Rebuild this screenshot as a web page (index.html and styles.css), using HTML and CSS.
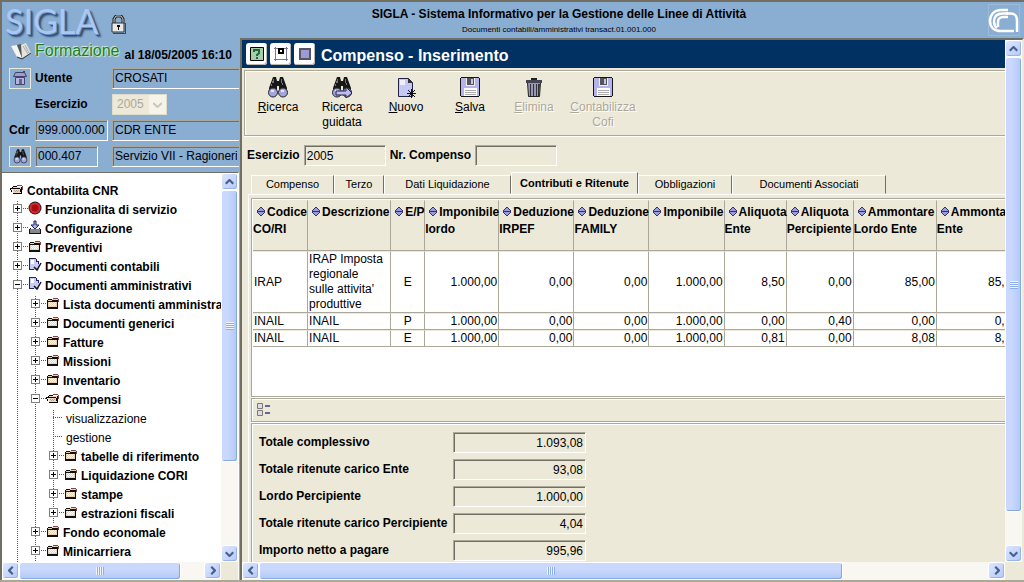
FILE: index.html
```html
<!DOCTYPE html>
<html lang="it">
<head>
<meta charset="utf-8">
<title>SIGLA - Compenso</title>
<link rel="stylesheet" href="styles.css">
</head>
<body>
<svg class="defs" aria-hidden="true">
  <symbol id="i-folder" viewBox="0 0 14 14"><path d="M2 5h3l1-2h6v8H2z" fill="#ecd2b6"/><path d="M3 6h1v1H3zM5 6h1v1H5zM7 6h1v1H7zM9 6h1v1H9zM4 7h1v1H4zM6 7h1v1H6zM8 7h1v1H8zM3 8h1v1H3zM5 8h1v1H5zM7 8h1v1H7zM9 8h1v1H9zM4 9h1v1H4zM6 9h1v1H6zM8 9h1v1H8z" fill="#fff"/><path d="M2 3h4v1h6v9H1V4h1zM2 6v5h9V6z" fill="#111" fill-rule="evenodd"/><path d="M2 4h4v1H2z" fill="#ecd2b6"/><path d="M7 2h5v1H7z" fill="#844"/><path d="M12 3h1v3h-1z" fill="#844"/></symbol>
  <symbol id="i-open" viewBox="0 0 14 14"><path d="M2 5h10v6H3z" fill="#f0d8bc"/><path d="M0 6h10v1H1v1H0zM1 8h1v2H1zM2 10h1v2h9V5h-1v6H3v-1zM3 4h4v1H3zM2 5h1v1H2zM10 7h1v3h-1z" fill="#000"/><path d="M7 3h5v1H7zM12 4h1v4h-1z" fill="#844"/><path d="M4 8h1v1H4zM6 8h1v1H6zM8 8h1v1H8zM5 9h1v1H5zM7 9h1v1H7z" fill="#b98"/></symbol>
  <symbol id="i-stop" viewBox="0 0 14 14"><circle cx="7" cy="7" r="6.5" fill="#222"/><circle cx="7" cy="7" r="5.5" fill="#d42a2a"/><circle cx="7" cy="7" r="3.5" fill="#a80c12"/></symbol>
  <symbol id="i-conf" viewBox="0 0 14 14"><path d="M2 9h10v4H2z" fill="#888"/><path d="M2 8h1v1H2zM11 8h1v1h-1zM1 9h1v5H1zM12 9h1v5h-1zM1 13h12v1H1z" fill="#111"/><path d="M6 1h2v4h3L7 9 3 5h3z" fill="#aab4ee" stroke="#226"/></symbol>
  <symbol id="i-doc" viewBox="0 0 14 14"><path d="M2 1h6l3 3v8H2z" fill="#c8ccf4"/><path d="M1 0h7v1H2v10h4v1H1zM8 1h1v2h2v3h-1V4H8z" fill="#226"/><path d="M6 9l3 3 4-7" fill="none" stroke="#111" stroke-width="1.5"/><path d="M3 2h3v4H3z" fill="#fff"/></symbol>
  <symbol id="i-bino" viewBox="0 0 22 21"><path d="M6 0h3l1 4h2l1-4h3l4 11v5h-8V9h-2v7H2v-5z" fill="#171717"/><path d="M6 2h1v4H5v3H4V7h1V4h1zM14 2h1v4h1v2h-1V6h-1z" fill="#777"/><circle cx="6" cy="15.500" r="4.500" fill="#a3a6dc" stroke="#222"/><circle cx="16" cy="15.500" r="4.500" fill="#a3a6dc" stroke="#222"/><path d="M4 13h3v2H4zM14 13h3v2h-3z" fill="#e4e5ff"/></symbol>
  <symbol id="i-save" viewBox="0 0 20 20"><path d="M0 1h1V0h18v1h1v18h-1v1H1v-1H0z" fill="#14141c"/><path d="M1 1h18v18H1z" fill="#b4b4e8"/><path d="M6 1h9v8H6z" fill="#eee"/><path d="M7 1h7v7H7z" fill="#555"/><path d="M11 2h2v5h-2z" fill="#c4c4ee"/><path d="M4 11h13v8H4z" fill="#fff"/><path d="M5 13h11v1H5zM5 15h11v1H5zM5 17h11v1H5z" fill="#aaa"/></symbol>
  <symbol id="i-up" viewBox="0 0 9 6"><path d="M4 0h1l4 4-1.500 1.500L4.500 2.600 1.500 5.500 0 4z" fill="#45608c"/></symbol>
  <symbol id="i-down" viewBox="0 0 9 6"><path d="M4 6h1l4-4L7.500.500l-3 2.900-3-2.900L0 2z" fill="#45608c"/></symbol>
  <symbol id="i-left" viewBox="0 0 6 9"><path d="M0 4v1l4 4 1.500-1.500-2.900-3 2.900-3L4 0z" fill="#45608c"/></symbol>
  <symbol id="i-right" viewBox="0 0 6 9"><path d="M6 4v1L2 9 .500 7.500l2.900-3-2.900-3L2 0z" fill="#45608c"/></symbol>
  <symbol id="i-sort" viewBox="0 0 8 9"><path d="M3 0h2v1h1v1h1v1h1v3H7v1H6v1H5v1H3V8H2V7H1V6H0V3h1V2h1V1h1z" fill="#33335c"/><path d="M3 1h2v1h1v1h1v1H1V3h1V2h1zM1 5h6v1H6v1H5v1H3V7H2V6H1z" fill="#9a9cdf"/></symbol>
</svg>

<aside class="side">
  <div class="brand">
    <span class="wordmark">SIGLA</span>
    <svg class="lock" viewBox="0 0 15 19"><path d="M3 9V4l2-3h5l2 3v5" fill="none" stroke="#222" stroke-width="3"/><path d="M3 9V4l2-3h5l2 3v5" fill="none" stroke="#ccc"/><path d="M2 18h12V8h1v11H2z" fill="#445"/><path d="M1 8h12v9H1z" fill="#e8e8e8" stroke="#333"/><path d="M6 10h3v2H8v3H7v-3H6z" fill="#111"/></svg>
  </div>
  <div class="context">
    <svg class="book" viewBox="0 0 22 17"><path d="M1 3l6-1 5 13-5-1z" fill="#f4f4ee"/><path d="M7 2l4-1 5 9-4 5z" fill="#555"/><path d="M11 2l5-2 5 10-9 5z" fill="#e4e4dc"/><path d="M13 3l5 8M15 2l4 8" stroke="#aaa"/><path d="M7 14l5 2 9-6" fill="none" stroke="#333"/></svg>
    <span class="mode">Formazione</span>
    <span class="date">al 18/05/2005 16:10</span>
  </div>
  <form class="login">
    <div class="lrow">
      <button type="button" class="ibtn" aria-label="Home"><svg width="16" height="16" viewBox="0 0 16 16"><path d="M3.500 7.500h9v7h-9z" fill="#b4b4e8" stroke="#446"/><path d="M1.500 6.500l2-4h9l2 4z" fill="#9c9cd0" stroke="#446"/><path d="M11 1h2v2h-2z" fill="#446"/><path d="M7 9h3v5H7z" fill="#667"/></svg></button>
      <label class="mid" for="utente">Utente</label>
      <input class="field open" id="utente" value="CROSATI" readonly>
    </div>
    <div class="lrow">
      <span class="lead"></span>
      <label class="mid" for="anno">Esercizio</label>
      <span class="select"><select id="anno" disabled><option>2005</option></select><svg class="chev" width="9" height="6"><path d="M0 1l4.500 4L9 1" fill="none" stroke="#c9c7ba" stroke-width="2"/></svg></span>
    </div>
    <div class="lrow">
      <label class="lead" for="cdr">Cdr</label>
      <span class="mid"><input class="field" id="cdr" value="999.000.000" readonly></span>
      <input class="field open" aria-label="Descrizione Cdr" value="CDR ENTE" readonly>
    </div>
    <div class="lrow">
      <button type="button" class="ibtn" aria-label="Cerca"><svg width="15" height="15"><use href="#i-bino"/></svg></button>
      <span class="mid"><input class="field short" aria-label="Unità" value="000.407" readonly></span>
      <input class="field open" aria-label="Descrizione unità" value="Servizio VII - Ragioneria" readonly>
    </div>
  </form>
  <div class="treeframe">
    <nav class="tree">
      <a class="root" href="#"><svg class="ic"><use href="#i-open"/></svg>Contabilita CNR</a>
      <ul>
        <li><a href="#"><i class="box plus"></i><svg class="ic"><use href="#i-stop"/></svg>Funzionalita di servizio</a></li>
        <li><a href="#"><i class="box plus"></i><svg class="ic"><use href="#i-conf"/></svg>Configurazione</a></li>
        <li><a href="#"><i class="box plus"></i><svg class="ic"><use href="#i-folder"/></svg>Preventivi</a></li>
        <li><a href="#"><i class="box plus"></i><svg class="ic"><use href="#i-doc"/></svg>Documenti contabili</a></li>
        <li><a href="#"><i class="box"></i><svg class="ic"><use href="#i-doc"/></svg>Documenti amministrativi</a>
          <ul>
            <li><a href="#"><i class="box plus"></i><svg class="ic"><use href="#i-folder"/></svg>Lista documenti amministrativi</a></li>
            <li><a href="#"><i class="box plus"></i><svg class="ic"><use href="#i-folder"/></svg>Documenti generici</a></li>
            <li><a href="#"><i class="box plus"></i><svg class="ic"><use href="#i-folder"/></svg>Fatture</a></li>
            <li><a href="#"><i class="box plus"></i><svg class="ic"><use href="#i-folder"/></svg>Missioni</a></li>
            <li><a href="#"><i class="box plus"></i><svg class="ic"><use href="#i-folder"/></svg>Inventario</a></li>
            <li><a href="#"><i class="box"></i><svg class="ic"><use href="#i-open"/></svg>Compensi</a>
              <ul>
                <li><a class="leaf" href="#">visualizzazione</a></li>
                <li><a class="leaf" href="#">gestione</a></li>
                <li><a href="#"><i class="box plus"></i><svg class="ic"><use href="#i-folder"/></svg>tabelle di riferimento</a></li>
                <li><a href="#"><i class="box plus"></i><svg class="ic"><use href="#i-folder"/></svg>Liquidazione CORI</a></li>
                <li><a href="#"><i class="box plus"></i><svg class="ic"><use href="#i-folder"/></svg>stampe</a></li>
                <li><a href="#"><i class="box plus"></i><svg class="ic"><use href="#i-folder"/></svg>estrazioni fiscali</a></li>
              </ul>
            </li>
            <li><a href="#"><i class="box plus"></i><svg class="ic"><use href="#i-folder"/></svg>Fondo economale</a></li>
            <li><a href="#"><i class="box plus"></i><svg class="ic"><use href="#i-folder"/></svg>Minicarriera</a></li>
          </ul>
        </li>
      </ul>
    </nav>
    <div class="sb v"><button type="button" aria-label="Su"><svg width="9" height="6"><use href="#i-up"/></svg></button><div class="thumb t-tree-v"><i></i></div><div class="rest r-tree-v"></div><button type="button" aria-label="Giù"><svg width="9" height="6"><use href="#i-down"/></svg></button></div>
    <div class="sb h"><button type="button" aria-label="Sinistra"><svg width="6" height="9"><use href="#i-left"/></svg></button><div class="thumb t-tree-h"><i></i></div><div class="rest r-tree-h"></div><button type="button" aria-label="Destra"><svg width="6" height="9"><use href="#i-right"/></svg></button></div>
  </div>
</aside>

<div class="right">
  <header class="top">
    <div class="titles"><div class="t1">SIGLA - Sistema Informativo per la Gestione delle Linee di Attività</div><div class="t2">Documenti contabili/amministrativi transact.01.001.000</div></div>
    <svg class="cnr" viewBox="0 0 32 32"><path d="M.5.500h31v31H.5z" fill="none" stroke="#9dbadb"/><g fill="none" stroke="#fff" stroke-width="2.500"><path d="M20 6h-7C6 6 2 11 2 17s4 10 11 10h13"/><path d="M20 9.500h-5c-6 0-9 3-9 8 0 3 1 5 3 6.500"/><path d="M10 23v-5c0-3 2-5 5-5h5"/><path d="M18 9.500h4c5 0 7 2 7 7V28"/></g></svg>
  </header>
  <div class="frame">
    <main class="content">
      <div class="bar">
        <button type="button" class="wbtn" aria-label="Aiuto"><svg width="14" height="14"><path d="M.5.500h13v13H.5z" fill="#a5d0a5" stroke="#000"/><path d="M4 5V3h5v3L7 8v1M7 10v2" fill="none" stroke="#264" stroke-width="2"/></svg></button>
        <button type="button" class="wbtn" aria-label="Riduci"><svg width="14" height="14"><path d="M1.500 0v14M12.500 0v14M0 1.500h14M0 12.500h14" stroke="#779"/><path d="M5 2h4v4H5z" fill="#fff" stroke="#000" stroke-width="2"/></svg></button>
        <button type="button" class="wbtn" aria-label="Ingrandisci"><svg width="14" height="14"><path d="M2 2h10v10H2z" fill="#9c9cd4" stroke="#556" stroke-width="2"/></svg></button>
        <h1>Compenso - Inserimento</h1>
      </div>
      <div class="toolbar groove">
        <button type="button"><svg width="22" height="21"><use href="#i-bino"/></svg><span><u>R</u>icerca</span></button>
        <button type="button"><svg width="22" height="21"><use href="#i-bino"/><path d="M5 14h10v-4l6 6-6 5v-3H5z" fill="#bcbcf0" stroke="#224"/></svg><span>Ricerca<br><u>g</u>uidata</span></button>
        <button type="button"><svg width="22" height="21"><path d="M3.500 1.500h10l4 4v14h-14z" fill="#c4c8f2" stroke="#224"/><path d="M5 3h5v5H5z" fill="#eef"/><path d="M13 1l5 5h-5z" fill="#333"/><path d="M16.500 12v9M12 16.500h9M13 13l7 7M20 13l-7 7" stroke="#111"/></svg><span><u>N</u>uovo</span></button>
        <button type="button"><svg width="20" height="21"><use href="#i-save" height="20"/></svg><span><u>S</u>alva</span></button>
        <button type="button" disabled><svg width="20" height="21"><path d="M3.500 5.500h13l-1 14h-11z" fill="#9a98b0" stroke="#222"/><path d="M2 3h16v3H2z" fill="#445"/><path d="M7 1h6v2H7z" fill="#222"/><path d="M6.500 7v12M9.500 7v12M12.500 7v12" stroke="#334"/><path d="M14 7h2l-1 12h-1z" fill="#333"/></svg><span><u>E</u>limina</span></button>
        <button type="button" disabled class="wide"><svg width="20" height="21"><use href="#i-save" height="20"/></svg><span><u>C</u>ontabilizza<br>Cofi</span></button>
      </div>
      <div class="keys">
        <label for="es">Esercizio</label><input class="field" id="es" value="2005" readonly>
        <label for="nr">Nr. Compenso</label><input class="field" id="nr" readonly>
      </div>
      <div class="tabs" role="tablist">
        <button type="button" role="tab" class="w1">Compenso</button><button type="button" role="tab" class="w2">Terzo</button><button type="button" role="tab" class="w3">Dati Liquidazione</button><button type="button" role="tab" class="w4 on" aria-selected="true">Contributi e Ritenute</button><button type="button" role="tab" class="w5">Obbligazioni</button><button type="button" role="tab" class="w6">Documenti Associati</button>
      </div>
      <div class="panel">
        <div class="grid groove">
          <table>
            <colgroup><col class="c1"><col class="c2"><col class="c3"><col class="c4"><col class="c5"><col class="c5"><col class="c5"><col class="c6"><col class="c7"><col class="c8"><col class="c8"></colgroup>
            <thead><tr>
              <th><svg class="so"><use href="#i-sort"/></svg>Codice<br>CO/RI</th><th><svg class="so"><use href="#i-sort"/></svg>Descrizione</th><th><svg class="so"><use href="#i-sort"/></svg>E/P</th><th><svg class="so"><use href="#i-sort"/></svg>Imponibile<br>lordo</th><th><svg class="so"><use href="#i-sort"/></svg>Deduzione<br>IRPEF</th><th><svg class="so"><use href="#i-sort"/></svg>Deduzione<br>FAMILY</th><th><svg class="so"><use href="#i-sort"/></svg>Imponibile</th><th><svg class="so"><use href="#i-sort"/></svg>Aliquota<br>Ente</th><th><svg class="so"><use href="#i-sort"/></svg>Aliquota<br>Percipiente</th><th><svg class="so"><use href="#i-sort"/></svg>Ammontare<br>Lordo Ente</th><th><svg class="so"><use href="#i-sort"/></svg>Ammontare<br>Ente</th>
            </tr></thead>
            <tbody>
              <tr><td>IRAP</td><td>IRAP Imposta regionale<br>sulle attivita'<br>produttive</td><td>E</td><td>1.000,00</td><td>0,00</td><td>0,00</td><td>1.000,00</td><td>8,50</td><td>0,00</td><td>85,00</td><td>85,00</td></tr>
              <tr><td>INAIL</td><td>INAIL</td><td>P</td><td>1.000,00</td><td>0,00</td><td>0,00</td><td>1.000,00</td><td>0,00</td><td>0,40</td><td>0,00</td><td>0,00</td></tr>
              <tr><td>INAIL</td><td>INAIL</td><td>E</td><td>1.000,00</td><td>0,00</td><td>0,00</td><td>1.000,00</td><td>0,81</td><td>0,00</td><td>8,08</td><td>8,08</td></tr>
            </tbody>
          </table>
        </div>
        <div class="gridbar groove"><button type="button" aria-label="Seleziona colonne"><svg width="14" height="14"><path d="M.5.500h5v5h-5zM.5 7.500h5v5h-5z" fill="#ddd" stroke="#777"/><path d="M8 3h5M8 10h5" stroke="#669" stroke-width="2"/></svg></button></div>
        <div class="totals groove">
          <label for="t1">Totale complessivo</label><input class="field" id="t1" value="1.093,08" readonly>
          <label for="t2">Totale ritenute carico Ente</label><input class="field" id="t2" value="93,08" readonly>
          <label for="t3">Lordo Percipiente</label><input class="field" id="t3" value="1.000,00" readonly>
          <label for="t4">Totale ritenute carico Percipiente</label><input class="field" id="t4" value="4,04" readonly>
          <label for="t5">Importo netto a pagare</label><input class="field" id="t5" value="995,96" readonly>
        </div>
      </div>
    </main>
    <div class="sb v"><button type="button" aria-label="Su"><svg width="9" height="6"><use href="#i-up"/></svg></button><div class="thumb t-main-v"><i></i></div><div class="rest r-main-v"></div><button type="button" aria-label="Giù"><svg width="9" height="6"><use href="#i-down"/></svg></button></div>
    <div class="sb h"><button type="button" aria-label="Sinistra"><svg width="6" height="9"><use href="#i-left"/></svg></button><div class="thumb t-main-h"><i></i></div><div class="rest r-main-h"></div><button type="button" aria-label="Destra"><svg width="6" height="9"><use href="#i-right"/></svg></button></div>
  </div>
</div>
</body>
</html>
```

FILE: styles.css
```css
* { box-sizing: border-box; }
body {
  margin: 0;
  height: 100vh;
  display: grid;
  grid-template-columns: 240px minmax(0, 1fr);
  grid-template-rows: minmax(0, 1fr);
  overflow: hidden;
  background: #8aadd2;
  color: #000;
  font: 12px/15px "Liberation Sans", Arial, sans-serif;
  border-top: 2px solid #716f64;
  border-bottom: 2px solid #aca899;
}
button, input, select { font: inherit; color: inherit; margin: 0; }
button { padding: 0; border: 0; background: none; }
svg { display: block; flex: none; }
.defs { position: absolute; width: 0; height: 0; }
a { color: inherit; text-decoration: none; }

/* left column */
.side {
  display: flex;
  flex-direction: column;
  min-height: 0;
  border-left: 2px solid #716f64;
  overflow: hidden;
}
.brand { display: flex; height: 36px; padding-left: 3px; gap: 8px; }
.wordmark {
  width: 98px;
  font: 34px/38px Lato, "Liberation Sans", sans-serif;
  color: #a9c8f4;
  text-shadow: 1px 1px 0 #6f94c8, 2px 2px 1px #2f4a6c, 3px 3px 2px #3c5a80;
}
.lock { width: 15px; height: 19px; margin-top: 13px; }
.context { display: flex; align-items: center; height: 26px; padding-left: 8px; }
.book { width: 22px; height: 17px; margin-right: 3px; }
.mode {
  font-size: 16px;
  line-height: 24px;
  color: #1c7c2c;
  text-shadow: 0 0 1px #c4e8c4, 1px 1px 1px #d4f0d4, -1px -1px 1px #d4f0d4;
}
.date { font-weight: bold; margin: 8px 0 0 5px; white-space: nowrap; }
.login { display: flex; flex-direction: column; gap: 4px; padding: 3px 0 5px 7px; }
.lrow { display: flex; align-items: center; gap: 4px; height: 22px; font-weight: bold; }
.lead { width: 22px; flex: none; }
.mid { width: 73px; flex: none; }
.lrow .field { font-weight: normal; }
.ibtn {
  width: 22px;
  height: 21px;
  flex: none;
  display: grid;
  place-items: center;
  border: 1px solid #ece9d8;
}
.field {
  display: block;
  width: 100%;
  min-width: 0;
  height: 21px;
  padding: 0 2px;
  background: transparent;
  border: 1px solid;
  border-color: #aca899 #fff #fff #aca899;
  border-radius: 0;
  outline: 0;
  box-shadow: inset 1px 1px 0 #716f64;
}
.field.open { flex: 1; border-right: 0; margin-right: 1px; width: auto; }
.field.short { width: 63px; }
.select { position: relative; width: 55px; }
.select select {
  appearance: none;
  width: 55px;
  height: 21px;
  padding: 0 4px;
  border: 1px solid #dfdccb;
  border-radius: 0;
  background: linear-gradient(90deg, #ece9d8 36px, #f5f3ea 36px);
  color: #aca899;
  font-weight: normal;
  opacity: 1;
}
.chev { position: absolute; right: 5px; top: 8px; }

.treeframe, .frame {
  display: grid;
  grid-template-columns: minmax(0, 1fr) 17px;
  grid-template-rows: minmax(0, 1fr) 18px;
  flex: 1;
  min-height: 0;
}
.treeframe {
  margin-right: 1px;
  background: #ece9d8;
  border-top: 1px solid #716f64;
  border-right: 1px solid #fff;
}
.tree {
  display: flex;
  flex-direction: column;
  background: #fff;
  overflow: hidden;
  padding: 9px 0 0 8px;
  font-weight: bold;
  white-space: nowrap;
}
.tree ul { list-style: none; margin: 0; padding: 0; }
.tree > ul, .tree ul ul {
  background: repeating-linear-gradient(#555 0 1px, #fff 1px 2px) 4px 0 / 1px 100% no-repeat;
}
.tree > ul { margin-left: 3px; flex: 1; }
.tree ul ul { margin-left: 18px; }
.tree a { display: flex; flex: none; height: 19px; line-height: 19px; }
.ic { width: 14px; height: 14px; margin-right: 3px; }
.box {
  width: 9px;
  height: 9px;
  margin: 3px 6px 0 0;
  flex: none;
  border: 1px solid #808080;
  background: linear-gradient(#000, #000) center / 5px 1px no-repeat, #fff;
  position: relative;
}
.box.plus { background: linear-gradient(#000, #000) center / 5px 1px no-repeat, linear-gradient(#000, #000) center / 1px 5px no-repeat, #fff; }
.box::after { content: ""; position: absolute; left: 9px; top: 3px; width: 5px; height: 1px; background: repeating-linear-gradient(90deg, #555 0 1px, #fff 1px 2px); }
.tree a.leaf {
  padding-left: 17px;
  font-weight: normal;
  background: repeating-linear-gradient(90deg, #555 0 1px, #fff 1px 2px) 4px 7px / 10px 1px no-repeat;
}

/* scroll bars */
.sb { display: flex; background: #f8f7f2; }
.sb.v { flex-direction: column; }
.sb button {
  flex: none;
  width: 17px;
  height: 17px;
  display: grid;
  place-items: center;
  border: 1px solid #fff;
  border-radius: 3px;
  background: linear-gradient(135deg, #dde6fe, #b4c9f9);
  box-shadow: inset -1px -1px 0 #98b4ea;
}
.thumb {
  display: grid;
  place-items: center;
  border: 1px solid #fff;
  border-radius: 3px;
  box-shadow: inset -1px -1px 0 #86a8e0;
}
.v .thumb { background: linear-gradient(90deg, #c9d8fc 40%, #b2c8f8); }
.h .thumb { background: linear-gradient(#c9d8fc 40%, #b2c8f8); }
.thumb i { width: 8px; height: 8px; }
.v .thumb i { background: repeating-linear-gradient(#f0f5ff 0 1px, #8cadf0 1px 2px); }
.h .thumb i { background: repeating-linear-gradient(90deg, #f0f5ff 0 1px, #8cadf0 1px 2px); }
.t-tree-v { flex: 272; } .r-tree-v { flex: 83; }
.t-tree-h { flex: 162; } .r-tree-h { flex: 23; }
.t-main-v { flex: 455; } .r-main-v { flex: 33; }
.t-main-h { flex: 584; } .r-main-h { flex: 145; }

/* right column */
.right { display: flex; flex-direction: column; min-height: 0; min-width: 0; }
.top { display: flex; height: 36px; padding: 2px 4px 0 0; }
.titles { flex: 1; margin-right: 110px; text-align: center; }
.t1 { font-weight: bold; line-height: 20px; }
.t2 { font-size: 8px; line-height: 11px; }
.cnr { width: 32px; height: 32px; }
.frame {
  background: #ece9d8;
  border-top: 2px solid #716f64;
  border-left: 2px solid #716f64;
  border-right: 2px solid #ece9d8;
}
.content { overflow: hidden; white-space: nowrap; }
.bar { display: flex; align-items: center; gap: 3px; height: 28px; padding-left: 4px; background: #003163; }
.wbtn {
  width: 21px;
  height: 22px;
  display: grid;
  place-items: center;
  background: #fff;
  border-radius: 3px;
  box-shadow: inset -1px -1px 0 #b8b8b0;
}
.bar h1 { margin: 4px 0 0 3px; font-size: 16px; line-height: 20px; color: #fff; }
.groove { border: 1px solid #aca899; border-right: 0; box-shadow: inset 1px 1px 0 #fff, 0 1px 0 #fff; }
.toolbar { display: flex; align-items: flex-start; height: 66px; margin: 2px 0 0 2px; padding: 6px 0 0 1px; }
.toolbar button { width: 64px; display: flex; flex-direction: column; align-items: center; gap: 2px; }
.toolbar button.wide { width: 74px; }
.toolbar button:disabled { color: #aca899; text-shadow: 1px 1px 0 #fff; }
.keys { display: flex; align-items: center; gap: 4px; margin-top: 9px; padding-left: 5px; font-weight: bold; }
.keys .field { width: 82px; font-weight: normal; }
.tabs { display: flex; align-items: flex-end; margin-top: 6px; padding-left: 9px; font-size: 11px; }
.tabs button {
  height: 19px;
  border: 1px solid;
  border-color: #fff #716f64 transparent #fff;
}
.tabs .on {
  height: 22px;
  font-weight: bold;
}
.w1 { width: 83px; } .w2 { width: 50px; } .w3 { width: 127px; }
.w4 { width: 127px; } .w5 { width: 94px; } .w6 { width: 154px; }
.panel { margin-left: 6px; padding: 3px 0 0 2px; border-top: 1px solid #fff; border-left: 1px solid #fff; }
.grid { height: 199px; background: #fff; padding: 1px 0 0 1px; overflow: hidden; }
table { table-layout: fixed; width: 767px; border-collapse: separate; border-spacing: 0; }
.c1 { width: 55px; } .c2 { width: 83px; } .c3 { width: 34px; } .c4 { width: 74px; }
.c5 { width: 75px; } .c6 { width: 62px; } .c7 { width: 67px; } .c8 { width: 83px; }
th, td {
  border: 1px solid;
  border-color: #ece9d8 #aca899 #aca899 #ece9d8;
  border-left: 0;
  padding: 0;
  text-align: left;
}
th { height: 51px; padding-top: 3px; line-height: 17px; vertical-align: top; background: #ece9d8; }
td { height: 17px; padding: 0 1px; text-align: right; white-space: normal; }
td:nth-child(-n+2) { text-align: left; }
td:nth-child(3) { text-align: center; }
.so { display: inline-block; width: 8px; height: 9px; margin: 0 2px 0 4px; }
.gridbar { height: 24px; margin-top: 1px; padding: 4px 0 0 5px; }
.totals {
  display: grid;
  grid-template-columns: 194px 133px;
  align-items: center;
  row-gap: 6px;
  margin-top: 1px;
  padding: 8px 0 60px 7px;
  font-weight: bold;
}
.totals .field { font-weight: normal; text-align: right; }
```
